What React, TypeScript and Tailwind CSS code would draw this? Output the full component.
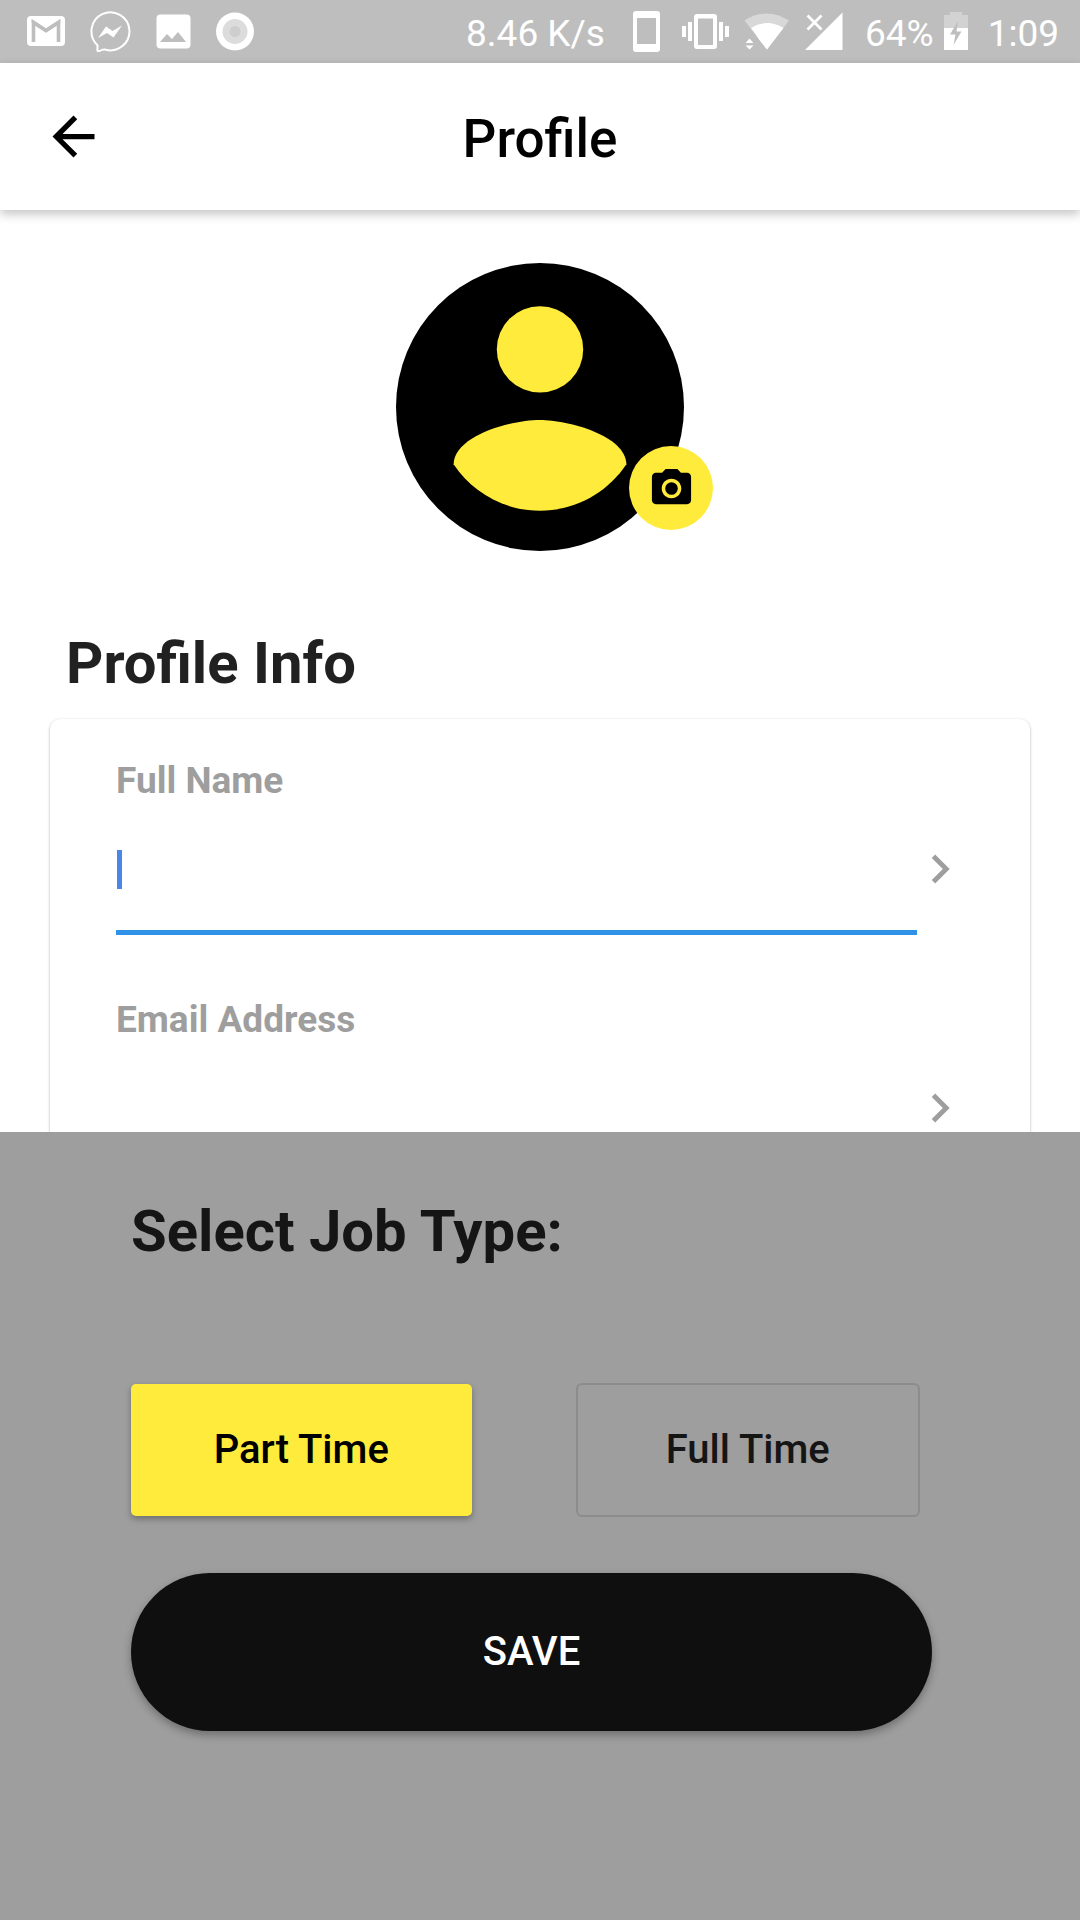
import React, { useState } from "react";
import { MdArrowBack, MdCameraAlt, MdChevronRight } from "react-icons/md";

function GmailIcon() {
  return (
    <svg className="h-[41px] w-[38px]" viewBox="0 0 38 41" aria-hidden="true">
      <rect x="0" y="5" width="38" height="30" rx="4" fill="#fff" />
      <path d="M6.5 31V11.5L19 19.5L31.5 11.5V31" fill="none" stroke="#bebebe" strokeWidth="3.6" />
      <path d="M4.7 8L19 17.5L33.3 8V12L19 21.5L4.7 12Z" fill="#bebebe" />
    </svg>
  );
}

function MessengerIcon() {
  return (
    <svg className="h-[41px] w-[41px]" viewBox="0 0 41 41" aria-hidden="true">
      <path
        d="M7.5 34.2A19 19 0 1 1 15 38.5Q12.500 38.200 9.500 40Q6.800 41 7.500 37.500Z"
        fill="none"
        stroke="#fff"
        strokeWidth="2"
        strokeLinejoin="round"
      />
      <path d="M8 27L16 15.500L22.500 20L32 14.500L23.500 26.500L17 22Z" fill="#fff" />
    </svg>
  );
}

function ImageIcon() {
  return (
    <svg className="h-[41px] w-[35px]" viewBox="0 0 35 41" aria-hidden="true">
      <rect x="0.500" y="3.500" width="34" height="34" rx="4" fill="#fff" />
      <path d="M4 31L11 23L16 28L22 21L30 31Z" fill="#bebebe" />
    </svg>
  );
}

function RecordIcon() {
  return (
    <svg className="h-[41px] w-[38px]" viewBox="0 0 38 41" aria-hidden="true">
      <circle cx="19" cy="20.500" r="19" fill="#fff" />
      <circle cx="19" cy="20.500" r="12.500" fill="#dcdcdc" />
      <circle cx="19" cy="20.500" r="5.500" fill="#cecece" />
    </svg>
  );
}

function PhoneIcon() {
  return (
    <svg className="h-[41px] w-[27px]" viewBox="0 0 27 41" aria-hidden="true">
      <path
        fillRule="evenodd"
        d="M3 0H24A3 3 0 0 1 27 3V38A3 3 0 0 1 24 41H3A3 3 0 0 1 0 38V3A3 3 0 0 1 3 0ZM4 7V33H23V7Z"
        fill="#fff"
      />
    </svg>
  );
}

function VibrateIcon() {
  return (
    <svg className="h-[41px] w-[47px]" viewBox="0 0 47 41" aria-hidden="true">
      <path
        fillRule="evenodd"
        d="M15 3H32A3 3 0 0 1 35 6V35A3 3 0 0 1 32 38H15A3 3 0 0 1 12 35V6A3 3 0 0 1 15 3ZM16 7.500V34H31V7.500Z"
        fill="#fff"
      />
      <path d="M0 15H4V26H0ZM6 11H10V30H6ZM37 11H41V30H37ZM43 15H47V26H43Z" fill="#fff" />
    </svg>
  );
}

function WifiIcon() {
  return (
    <svg className="h-[41px] w-[46px]" viewBox="0 0 46 41" aria-hidden="true">
      <path d="M0.500 9.500Q22.500 -4.500 45 9.500L23 38.500Z" fill="#d8d8d8" />
      <path d="M7 17Q23 7 39.500 17L23 38.500Z" fill="#fff" />
      <path d="M0 25H14L10 39H0Z" fill="#bebebe" />
      <path d="M5.500 27.500L9.500 32H1.500ZM5.500 38.500L9.500 34.500H1.500Z" fill="#fff" />
      <path d="M12.500 25L23 38.500V25Z" fill="#fff" />
    </svg>
  );
}

function SignalIcon() {
  return (
    <svg className="h-[41px] w-[38px]" viewBox="0 0 38 41" aria-hidden="true">
      <path d="M37.500 1.500V39H0Z" fill="#fff" />
      <path d="M2.500 4.500L16.500 18.500M16.500 4.500L2.500 18.500" stroke="#bebebe" strokeWidth="5" />
      <path d="M2.500 4.500L16.500 18.500M16.500 4.500L2.500 18.500" stroke="#fff" strokeWidth="2.800" />
    </svg>
  );
}

function BatteryIcon() {
  return (
    <svg className="h-[41px] w-[24px]" viewBox="0 0 24 41" aria-hidden="true">
      <path d="M6 1H18V4H24V17H0V4H6Z" fill="#d2d2d2" />
      <path d="M0 17H24V39H0Z" fill="#fff" />
      <path d="M14 10L6 23.500H11.500L9.500 34L17.500 20.500H12.500Z" fill="#bebebe" />
    </svg>
  );
}

function StatusBar() {
  return (
    <div className="flex h-[63px] shrink-0 items-center justify-between bg-[#bebebe] pr-[21px] pl-[27px] text-[37px] leading-[44px] text-white">
      <div className="flex items-center gap-[25px]">
        <GmailIcon />
        <MessengerIcon />
        <ImageIcon />
        <RecordIcon />
      </div>
      <div className="flex items-center">
        <span className="mr-7 pt-1">8.46 K/s</span>
        <span className="mr-[22px]">
          <PhoneIcon />
        </span>
        <div className="mr-[22px] flex gap-[15px]">
          <VibrateIcon />
          <WifiIcon />
          <SignalIcon />
        </div>
        <span className="mr-2.5 pt-1">64%</span>
        <BatteryIcon />
        <span className="ml-5 pt-1">1:09</span>
      </div>
    </div>
  );
}

function Avatar() {
  return (
    <div className="relative mx-auto size-[288px]">
      <svg className="size-full" viewBox="2 2 20 20" role="img" aria-label="Profile picture">
        <circle cx="12" cy="12" r="10" fill="#000" />
        <circle cx="12" cy="8" r="3" fill="#ffeb3b" />
        <path
          d="M12 19.200c-2.500 0-4.710-1.280-6-3.220.03-1.990 4-3.080 6-3.080 1.990 0 5.970 1.090 6 3.080-1.290 1.940-3.500 3.220-6 3.220z"
          fill="#ffeb3b"
        />
      </svg>
      <button
        type="button"
        aria-label="Change picture"
        className="absolute -right-[29px] bottom-[21px] flex size-[84px] items-center justify-center rounded-full bg-[#ffeb3b] text-black"
      >
        <MdCameraAlt className="size-[47px]" />
      </button>
    </div>
  );
}

type FieldProps = { id: string; label: string; type: string; active?: boolean };

function Field({ id, label, type, active = false }: FieldProps) {
  const [value, setValue] = useState("");
  return (
    <div>
      <label htmlFor={id} className="block text-[37px] leading-[44px] font-bold text-[#9e9e9e]">
        {label}
      </label>
      <div className="flex items-center">
        <div className="relative flex flex-1 items-center">
          <input
            id={id}
            type={type}
            value={value}
            onChange={(e) => setValue(e.target.value)}
            className={
              active
                ? "h-[132px] w-full border-b-[5px] border-[#2f92e6] bg-transparent text-[42px] caret-transparent outline-none"
                : "h-[132px] w-full border-b-[5px] border-transparent bg-transparent text-[42px] outline-none"
            }
          />
          {active && value === "" && <span className="absolute left-px h-[39px] w-[5px] bg-[#4a86e8]" />}
        </div>
        <MdChevronRight className="-ml-1.5 size-[58px] text-[#9e9e9e]" aria-hidden="true" />
      </div>
    </div>
  );
}

function JobTypeSheet() {
  const [job, setJob] = useState("Part Time");
  return (
    <section className="relative z-10 shrink-0 bg-[#9e9e9e] pt-[63px] pr-[148px] pb-[189px] pl-[131px]">
      <h2 className="text-[58px] leading-[72px] font-bold text-[#151515]">Select Job Type:</h2>
      <div className="mt-[116px] mr-3 flex gap-[104px]">
        {["Part Time", "Full Time"].map((name) => (
          <button
            key={name}
            type="button"
            aria-pressed={job === name}
            onClick={() => setJob(name)}
            className={
              job === name
                ? "my-px h-[132px] flex-1 rounded-[5px] bg-[#ffeb3b] text-[40px] font-medium text-black shadow-[0_3px_6px_rgba(0,0,0,0.3)]"
                : "h-[134px] flex-1 rounded-[6px] border-2 border-[#8c8c8c] text-[40px] font-medium text-[#151515]"
            }
          >
            {name}
          </button>
        ))}
      </div>
      <button
        type="button"
        className="mt-14 h-[158px] w-full rounded-full bg-[#0f0f0f] text-[40px] font-medium text-white shadow-[0_4px_8px_rgba(0,0,0,0.3)]"
      >
        SAVE
      </button>
    </section>
  );
}

export default function App() {
  return (
    <div className="flex h-screen flex-col overflow-hidden bg-white font-['Roboto',sans-serif]">
      <StatusBar />
      <header className="relative z-10 grid h-[147px] shrink-0 grid-cols-[63px_1fr_63px] items-center bg-white px-[42px] shadow-[0_4px_10px_rgba(0,0,0,0.24)]">
        <button type="button" aria-label="Back" className="text-black">
          <MdArrowBack className="size-[63px]" />
        </button>
        <h1 className="pt-1 text-center text-[53px] leading-[64px] font-medium text-black">Profile</h1>
      </header>
      <main className="min-h-0 flex-1 overflow-hidden px-[50px] pt-[53px]">
        <Avatar />
        <h2 className="mt-[76px] mb-5 ml-4 text-[58px] leading-[72px] font-bold text-[#212121]">Profile Info</h2>
        <form className="flex flex-col gap-[63px] rounded-[10px] bg-white pt-10 pr-[61px] pb-[63px] pl-[66px] shadow-[0_1px_3px_rgba(0,0,0,0.3)]">
          <Field id="full-name" label="Full Name" type="text" active />
          <Field id="email" label="Email Address" type="email" />
        </form>
      </main>
      <JobTypeSheet />
    </div>
  );
}
